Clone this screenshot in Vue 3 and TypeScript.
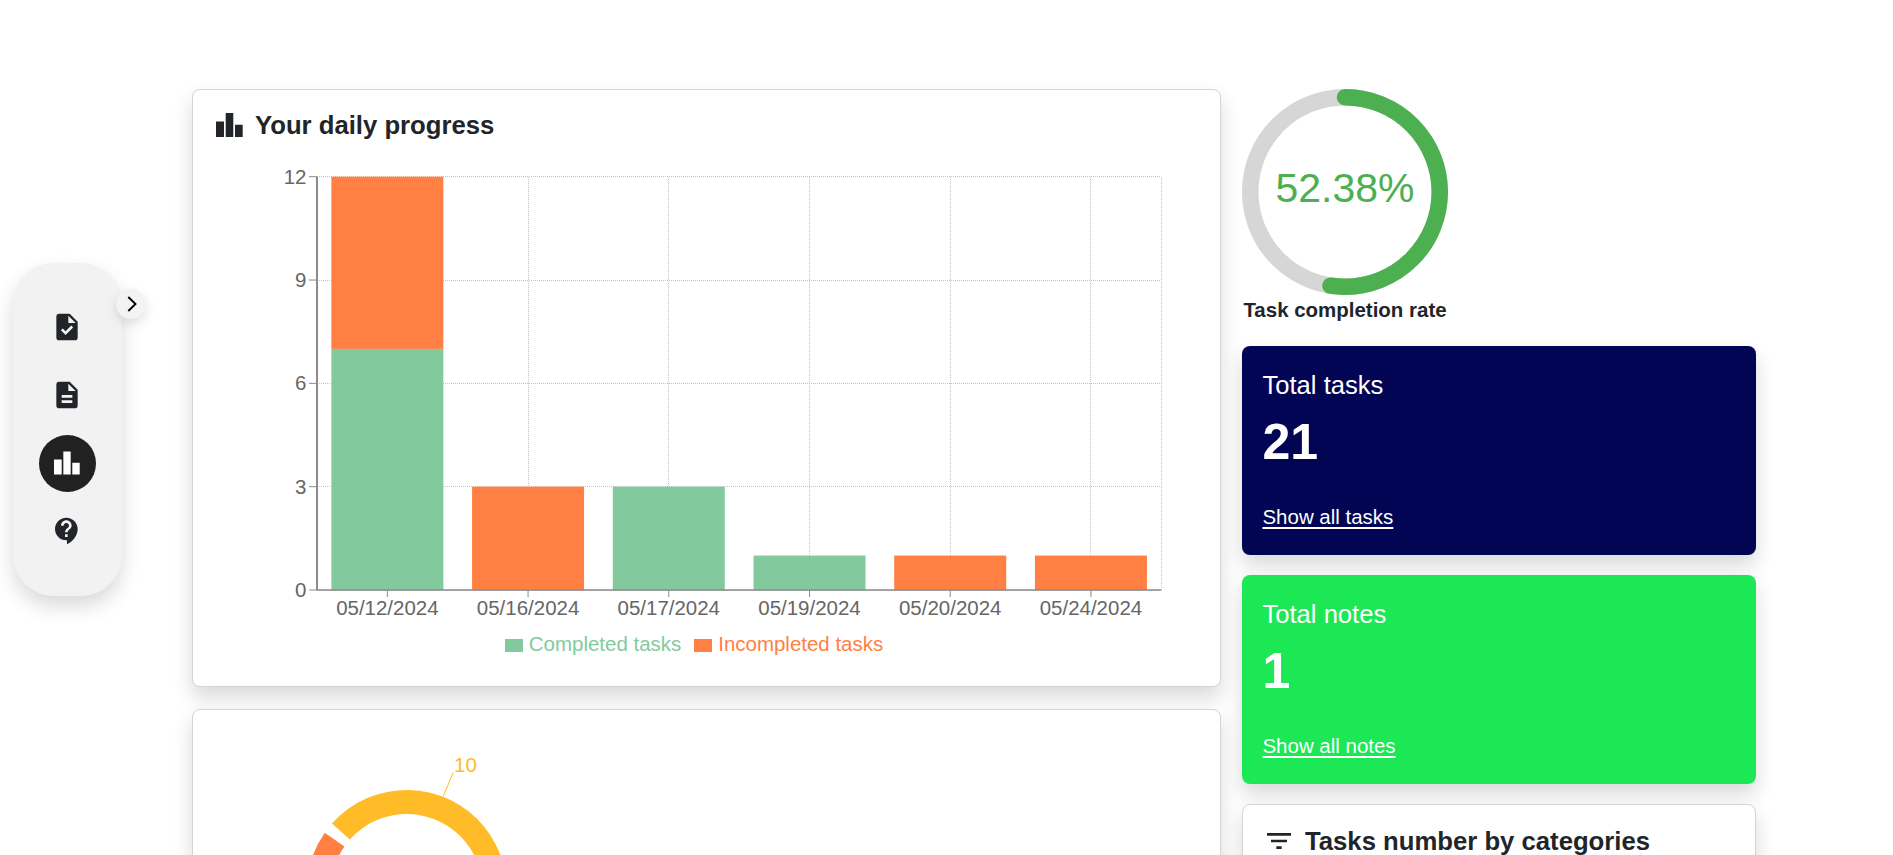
<script setup lang="ts">
interface Day {
  date: string
  done: number
  missed: number
}

const GREEN = '#82ca9d'
const ORANGE = '#ff8042'
const YELLOW = '#ffbb28'

const days: Day[] = [
  { date: '05/12/2024', done: 7, missed: 5 },
  { date: '05/16/2024', done: 0, missed: 3 },
  { date: '05/17/2024', done: 3, missed: 0 },
  { date: '05/19/2024', done: 1, missed: 0 },
  { date: '05/20/2024', done: 0, missed: 1 },
  { date: '05/24/2024', done: 0, missed: 1 },
]

// Plot area inside the chart svg, whose origin is the card's content corner.
const left = 101
const right = 945.3
const top = 19.7
const bottom = 433
const maxValue = 12
const barWidth = 112
const band = (right - left) / days.length
const unit = (bottom - top) / maxValue
const yTicks = [0, 3, 6, 9, 12]
const yOf = (v: number) => bottom - v * unit
const centerOf = (i: number) => left + band * (i + 0.5)

const bars = days.map((d, i) => ({
  ...d,
  x: centerOf(i),
  barX: centerOf(i) - barWidth / 2,
  doneY: yOf(d.done),
  doneH: d.done * unit,
  missedY: yOf(d.done + d.missed),
  missedH: d.missed * unit,
}))

// Donut segments
const cx = 190.7
const cy = 120
const rOuter = 100
const rInner = 76
const pt = (r: number, deg: number) => {
  const a = (deg * Math.PI) / 180
  return `${(cx + r * Math.sin(a)).toFixed(2)} ${(cy - r * Math.cos(a)).toFixed(2)}`
}
const segment = (from: number, to: number) => {
  const large = Math.abs(to - from) > 180 ? 1 : 0
  return `M${pt(rOuter, from)} A${rOuter} ${rOuter} 0 ${large} 1 ${pt(rOuter, to)} L${pt(rInner, to)} A${rInner} ${rInner} 0 ${large} 0 ${pt(rInner, from)} Z`
}
const yellowArc = segment(-48.4, 150)
const orangeArc = segment(-130, -55)

// Gauge
const rate = 52.38
const gaugeSize = 206
const gaugeR = 94.76
const gaugeC = 2 * Math.PI * gaugeR
const gaugeDash = `${(gaugeC * rate) / 100} ${gaugeC}`

const stats = [
  { title: 'Total tasks', value: 21, link: 'Show all tasks', tone: 'navy' },
  { title: 'Total notes', value: 1, link: 'Show all notes', tone: 'lime' },
]
</script>

<template>
  <div class="page">
    <aside class="rail">
      <button class="toggle" type="button" aria-label="Expand">
        <svg viewBox="0 0 10 16" width="10" height="16">
          <path d="M1.3 1 8.5 8l-7.2 7" fill="none" stroke="#000" stroke-width="1.9" />
        </svg>
      </button>
      <div class="rail-item">
        <svg viewBox="0 0 24 24" width="32" height="32">
          <path d="M14 2H6c-1.1 0-1.99.9-1.99 2L4 20c0 1.1.89 2 1.99 2H18c1.1 0 2-.9 2-2V8l-6-6zm-3.06 16L7.4 14.46l1.41-1.41 2.12 2.12 4.24-4.24 1.41 1.41L10.94 18zM13 9V3.5L18.5 9H13z" />
        </svg>
      </div>
      <div class="rail-item">
        <svg viewBox="0 0 24 24" width="32" height="32">
          <path d="M14 2H6c-1.1 0-1.99.9-1.99 2L4 20c0 1.1.89 2 1.99 2H18c1.1 0 2-.9 2-2V8l-6-6zm2 16H8v-2h8v2zm0-4H8v-2h8v2zm-3-5V3.5L18.5 9H13z" />
        </svg>
      </div>
      <div class="rail-item active">
        <svg viewBox="0 0 27 24" width="26" height="24">
          <path d="M0 8.4h8V24H0zM9.7 0h7.6v24H9.7zM19 11.7h7.7V24H19z" />
        </svg>
      </div>
      <div class="rail-item">
        <svg viewBox="0 0 24 24" width="32" height="32">
          <path d="M11.5 2C6.81 2 3 5.81 3 10.5S6.81 19 11.5 19h.5v3c4.86-2.34 8-7 8-11.5C20 5.81 16.19 2 11.5 2zm1 14.5h-2v-2h2v2zm0-3.5h-2c0-3.25 3-3 3-5 0-1.1-.9-2-2-2s-2 .9-2 2h-2c0-2.21 1.79-4 4-4s4 1.79 4 4c0 2.5-3 2.75-3 5z" />
        </svg>
      </div>
    </aside>

    <main class="board">
      <div class="col-left">
        <section class="card progress">
          <header class="card-head">
            <svg class="head-bars" viewBox="0 0 27 24" width="27" height="24">
              <path d="M0 8.4h8V24H0zM9.7 0h7.6v24H9.7zM19 11.7h7.7V24H19z" />
            </svg>
            <h2>Your daily progress</h2>
          </header>
          <svg class="chart" viewBox="0 0 981 468" width="981" height="468">
            <g class="grid">
              <line v-for="t in yTicks" :key="'h' + t" :x1="left" :x2="right" :y1="yOf(t)" :y2="yOf(t)" />
              <line v-for="b in bars" :key="'v' + b.date" :x1="b.x" :x2="b.x" :y1="top" :y2="bottom" />
              <line :x1="right" :x2="right" :y1="top" :y2="bottom" />
            </g>
            <g v-for="b in bars" :key="b.date">
              <rect :x="b.barX" :y="b.doneY" :width="barWidth" :height="b.doneH" :fill="GREEN" />
              <rect :x="b.barX" :y="b.missedY" :width="barWidth" :height="b.missedH" :fill="ORANGE" />
            </g>
            <g class="axis">
              <line class="y-line" :x1="left" :x2="left" :y1="top" :y2="bottom" />
              <line class="x-line" :x1="left" :x2="right" :y1="bottom" :y2="bottom" />
              <line v-for="t in yTicks" :key="'yt' + t" :x1="left - 8" :x2="left" :y1="yOf(t)" :y2="yOf(t)" />
              <line v-for="b in bars" :key="'xt' + b.date" :x1="b.x" :x2="b.x" :y1="bottom" :y2="bottom + 7" />
            </g>
            <text v-for="t in yTicks" :key="'yl' + t" class="tick" text-anchor="end" :x="left - 10.5" :y="yOf(t) + 7">{{ t }}</text>
            <text v-for="b in bars" :key="'xl' + b.date" class="tick" text-anchor="middle" :x="b.x" :y="458">{{ b.date }}</text>
          </svg>
          <ul class="legend">
            <li class="legend-done"><i></i>Completed tasks</li>
            <li class="legend-missed"><i></i>Incompleted tasks</li>
          </ul>
        </section>

        <section class="card donut-card">
          <svg class="donut" viewBox="0 0 500 240" width="500" height="240">
            <path :d="yellowArc" :fill="YELLOW" />
            <path :d="orangeArc" :fill="ORANGE" />
            <line x1="227.3" y1="26" x2="237.3" y2="2.5" :stroke="YELLOW" stroke-width="1" />
            <text class="pie-label" x="238" y="2" :fill="YELLOW">10</text>
          </svg>
        </section>
      </div>

      <div class="col-right">
        <div class="gauge-block">
          <svg class="gauge" :viewBox="`0 0 ${gaugeSize} ${gaugeSize}`" :width="gaugeSize" :height="gaugeSize">
            <circle cx="103" cy="103" :r="gaugeR" fill="none" stroke="#d6d6d6" stroke-width="16.5" />
            <circle
              cx="103"
              cy="103"
              :r="gaugeR"
              fill="none"
              stroke="#4caf50"
              stroke-width="16.5"
              stroke-linecap="round"
              :stroke-dasharray="gaugeDash"
              transform="rotate(-90 103 103)"
            />
            <text class="gauge-text" x="103" y="113" text-anchor="middle">{{ rate }}%</text>
          </svg>
          <p class="gauge-label">Task completion rate</p>
        </div>

        <section v-for="s in stats" :key="s.title" class="stat" :class="s.tone">
          <h3>{{ s.title }}</h3>
          <strong>{{ s.value }}</strong>
          <a href="#">{{ s.link }}</a>
        </section>

        <section class="card cats">
          <header class="cats-head">
            <svg viewBox="0 0 24 24" width="32" height="32">
              <path d="M10 18h4v-2h-4v2zM3 6v2h18V6H3zm3 7h12v-2H6v2z" />
            </svg>
            <h2>Tasks number by categories</h2>
          </header>
        </section>
      </div>
    </main>
  </div>
</template>

<style>
html,
body {
  margin: 0;
  overflow: hidden;
  background: #fff;
}
</style>

<style scoped>
.page {
  display: flex;
  align-items: flex-start;
  height: 855px;
  overflow: hidden;
  font-family: "Liberation Sans", Arial, sans-serif;
  color: #212529;
}

/* Left floating rail */
.rail {
  position: relative;
  flex: none;
  box-sizing: border-box;
  width: 109px;
  height: 333px;
  margin: 263px 0 0 13px;
  padding: 36px 1px 36px 0;
  display: flex;
  flex-direction: column;
  align-items: center;
  gap: 12px;
  background: #f2f2f2;
  border-radius: 41px;
  box-shadow: 0 10.24px 20.48px rgba(0, 0, 0, 0.15);
}
.rail-item {
  width: 56px;
  height: 56px;
  border-radius: 50%;
  display: flex;
  align-items: center;
  justify-content: center;
  fill: #212529;
}
.rail-item.active {
  width: 57px;
  height: 57px;
  margin: -0.5px;
  background: #212121;
  fill: #fff;
}
.toggle {
  position: absolute;
  top: 26px;
  right: -24px;
  width: 30px;
  height: 30px;
  padding: 0 0 0 1px;
  border: 0;
  border-radius: 50%;
  display: flex;
  align-items: center;
  justify-content: center;
  background: #f3f3f3;
  box-shadow: 0 5px 12px rgba(0, 0, 0, 0.12);
}

/* Board */
.board {
  flex: none;
  margin: 89px 0 0 70px;
  display: grid;
  grid-template-columns: 1029px 514px;
  column-gap: 21px;
  align-items: start;
}
.col-left {
  display: flex;
  flex-direction: column;
  gap: 22px;
}
.col-right {
  display: flex;
  flex-direction: column;
  gap: 20px;
}
.card {
  box-sizing: border-box;
  background: #fff;
  border: 1px solid #d4d4d4;
  border-radius: 8px;
  box-shadow: 0 10.24px 20.48px rgba(0, 0, 0, 0.15);
}
h2 {
  margin: 0;
  font-size: 25.7px;
  line-height: 32px;
  font-weight: 700;
}

/* Progress chart */
.progress {
  padding: 23px 23px 30.5px;
}
.card-head {
  display: flex;
  align-items: center;
  gap: 12px;
  height: 24px;
}
.head-bars {
  fill: #212529;
}
.chart {
  display: block;
  margin-top: 20px;
}
.grid line {
  stroke: #c4c4c4;
  stroke-width: 1;
  stroke-dasharray: 1 1;
  shape-rendering: crispEdges;
}
.axis line {
  stroke: #8a8a8a;
  stroke-width: 1;
}
.axis .y-line {
  stroke-width: 2;
}
.axis .x-line {
  stroke-width: 1.5;
}
.tick {
  font-size: 20.48px;
  fill: #666;
}
.legend {
  list-style: none;
  margin: 6.5px 0 0;
  padding: 0 25px 0 0;
  height: 24px;
  display: flex;
  justify-content: center;
  align-items: center;
  gap: 13px;
  font-size: 20.48px;
}
.legend li {
  display: flex;
  align-items: center;
  gap: 6px;
}
.legend i {
  width: 18px;
  height: 13.5px;
  margin-top: 4px;
}
.legend-done {
  color: #82ca9d;
}
.legend-done i {
  background: #82ca9d;
}
.legend-missed {
  color: #ff8042;
}
.legend-missed i {
  background: #ff8042;
}

/* Donut */
.donut-card {
  height: 400px;
  padding-top: 60px;
}
.donut {
  display: block;
  margin-left: 23px;
  overflow: visible;
}
.pie-label {
  font-size: 20.48px;
}

/* Gauge */
.gauge-block {
  display: flex;
  flex-direction: column;
  align-items: flex-start;
  width: 206px;
}
.gauge {
  display: block;
}
.gauge-text {
  font-size: 40.96px;
  fill: #4caf50;
}
.gauge-label {
  margin: 0;
  width: 100%;
  text-align: center;
  white-space: nowrap;
  font-size: 20.48px;
  line-height: 30.7px;
  font-weight: 700;
}

/* Stat cards */
.stat {
  box-sizing: border-box;
  height: 209px;
  padding: 20.48px;
  border-radius: 8px;
  color: #fff;
  box-shadow: 0 10.24px 20.48px rgba(0, 0, 0, 0.15);
  display: flex;
  flex-direction: column;
  align-items: flex-start;
}
.stat.navy {
  background: #020553;
}
.stat.lime {
  background: #1ce856;
}
.stat h3 {
  margin: 0;
  font-size: 25.6px;
  line-height: 38.4px;
  font-weight: 400;
}
.stat strong {
  margin-top: 7px;
  font-size: 50px;
  line-height: 61.4px;
  font-weight: 700;
}
.stat a {
  margin-top: 29px;
  font-size: 20.48px;
  line-height: 30.7px;
  color: inherit;
  text-decoration: underline;
  text-decoration-thickness: 1.5px;
  text-underline-offset: 3px;
}

/* Categories */
.cats {
  height: 300px;
  padding: 20px;
}
.cats-head {
  display: flex;
  align-items: center;
  gap: 10px;
  fill: #212529;
}
</style>
